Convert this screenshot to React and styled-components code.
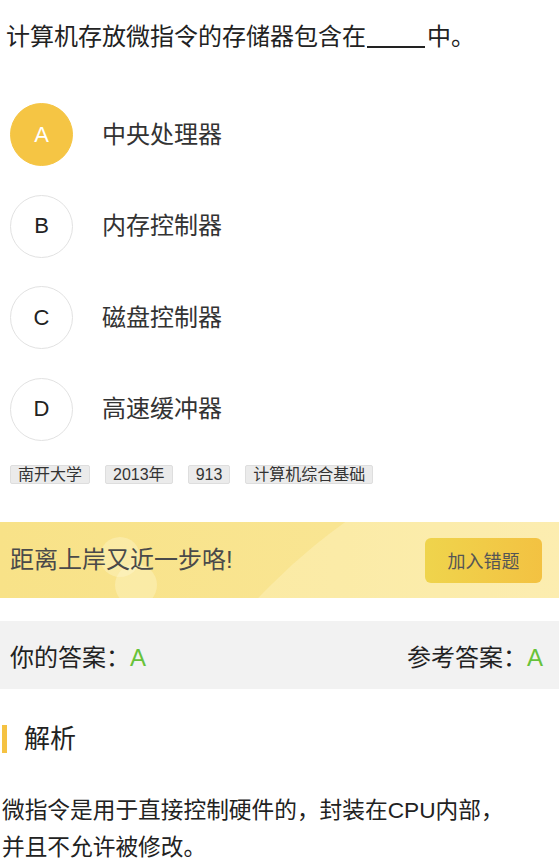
import React from 'react';
import styled, { createGlobalStyle } from 'styled-components';

const GlobalStyle = createGlobalStyle`
  html, body {
    margin: 0;
    padding: 0;
    background: #ffffff;
  }
  body {
    font-family: "Liberation Sans", "Noto Sans CJK SC", sans-serif;
    color: #333333;
  }
`;

const Page = styled.div`
  width: 559px;
  display: flex;
  flex-direction: column;
`;

// 题干
const Question = styled.div`
  padding: 22px 6px 0;
  font-size: 24px;
  line-height: 30px;
  color: #222222;
`;

const Blank = styled.span`
  display: inline-block;
  width: 58px;
  height: 20px;
  margin: 0 2px 0 1px;
  border-bottom: 2px solid #222222;
  vertical-align: -3px;
`;

// 选项
const OptionList = styled.div`
  margin-top: 51px;
  display: flex;
  flex-direction: column;
  gap: 28.5px;
  padding-left: 10px;
`;

const OptionRow = styled.div`
  display: flex;
  align-items: center;
  gap: 29px;
  height: 63px;
`;

const Circle = styled.div`
  width: 63px;
  height: 63px;
  box-sizing: border-box;
  border-radius: 50%;
  display: flex;
  align-items: center;
  justify-content: center;
  font-size: 22px;
  background: ${props => (props.active ? '#f5c544' : '#ffffff')};
  border: 1px solid ${props => (props.active ? '#f5c544' : '#e2e2e2')};
  color: ${props => (props.active ? '#ffffff' : '#222222')};
`;

const OptionText = styled.span`
  font-size: 24px;
  line-height: 30px;
  color: #333333;
`;

// 标签
const TagRow = styled.div`
  margin-top: 24.5px;
  padding-left: 10px;
  display: flex;
  gap: 15px;
`;

const Tag = styled.span`
  font-size: 16px;
  line-height: 17px;
  padding: 0 7px;
  background: #ebebeb;
  border: 1px solid #dedede;
  border-radius: 2px;
  color: #333333;
`;

// 鼓励横幅
const Banner = styled.div`
  position: relative;
  overflow: hidden;
  margin-top: 38px;
  height: 76px;
  display: flex;
  align-items: center;
  justify-content: space-between;
  padding: 0 17px 0 10px;
  background: linear-gradient(90deg, #f8e288 0%, #f9e592 60%, #fae8a0 100%);

  &::before {
    content: '';
    position: absolute;
    left: 89px;
    top: -116px;
    width: 1232px;
    height: 1232px;
    border-radius: 50%;
    background: rgba(255, 246, 205, 0.35);
  }
`;

const Bubble = styled.span`
  position: absolute;
  border-radius: 50%;
  background: rgba(255, 248, 215, 0.35);
  left: ${props => props.x}px;
  top: ${props => props.y}px;
  width: ${props => props.size}px;
  height: ${props => props.size}px;
`;

const BannerText = styled.span`
  position: relative;
  font-size: 24px;
  line-height: 30px;
  color: #4a4a4a;
`;

const AddButton = styled.button`
  position: relative;
  width: 117px;
  height: 45px;
  border: none;
  border-radius: 6px;
  background: linear-gradient(90deg, #efd44c 0%, #f3c242 100%);
  font-family: inherit;
  font-size: 18px;
  color: #555555;
  cursor: pointer;
`;

// 答案栏
const AnswerBar = styled.div`
  margin-top: 23px;
  height: 68px;
  background: #f2f2f2;
  display: flex;
  align-items: center;
  justify-content: space-between;
  padding: 0 16px 0 10px;
  font-size: 24px;
  color: #222222;
`;

const Green = styled.span`
  color: #67c23a;
  font-size: 24px;
`;

// 解析
const SectionTitle = styled.div`
  margin-top: 35px;
  display: flex;
  align-items: center;
  gap: 17px;
  padding-left: 2px;
`;

const TitleBar = styled.span`
  width: 5px;
  height: 28px;
  background: #f5c242;
`;

const TitleText = styled.span`
  font-size: 26px;
  line-height: 30px;
  color: #222222;
`;

const Explain = styled.p`
  margin: 38px 0 0;
  padding: 0 42px 0 2px;
  font-size: 22.7px;
  line-height: 37px;
  color: #222222;
`;

const options = [
  { key: 'A', text: '中央处理器' },
  { key: 'B', text: '内存控制器' },
  { key: 'C', text: '磁盘控制器' },
  { key: 'D', text: '高速缓冲器' },
];

const tags = ['南开大学', '2013年', '913', '计算机综合基础'];

const App = () => {
  const myAnswer = 'A';

  return (
    <Page>
      <GlobalStyle />
      <Question>
        计算机存放微指令的存储器包含在<Blank />中。
      </Question>

      <OptionList>
        {options.map(opt => (
          <OptionRow key={opt.key}>
            <Circle active={opt.key === myAnswer}>{opt.key}</Circle>
            <OptionText>{opt.text}</OptionText>
          </OptionRow>
        ))}
      </OptionList>

      <TagRow>
        {tags.map(t => (
          <Tag key={t}>{t}</Tag>
        ))}
      </TagRow>

      <Banner>
        <Bubble x={100} y={15} size={40} />
        <Bubble x={115} y={42} size={42} />
        <BannerText>距离上岸又近一步咯!</BannerText>
        <AddButton>加入错题</AddButton>
      </Banner>

      <AnswerBar>
        <span>
          你的答案：<Green>A</Green>
        </span>
        <span>
          参考答案：<Green>A</Green>
        </span>
      </AnswerBar>

      <SectionTitle>
        <TitleBar />
        <TitleText>解析</TitleText>
      </SectionTitle>

      <Explain>微指令是用于直接控制硬件的，封装在CPU内部，并且不允许被修改。</Explain>
    </Page>
  );
};

export default App;
